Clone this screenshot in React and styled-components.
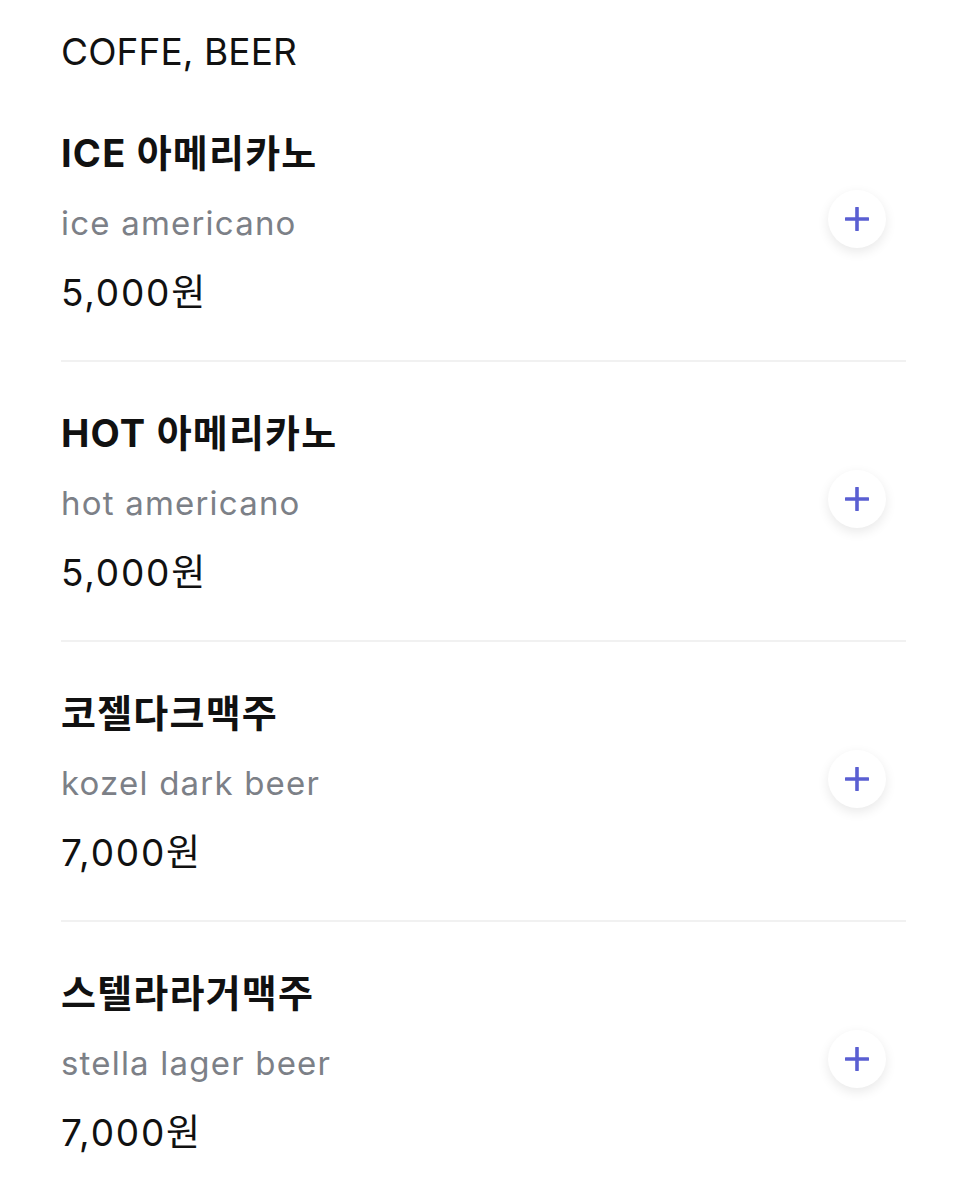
import React from 'react'
import styled, { createGlobalStyle } from 'styled-components'

const GlobalStyle = createGlobalStyle`
  body {
    margin: 0;
    background: #ffffff;
    font-family: Inter, "Noto Sans CJK KR", sans-serif;
    color: #111111;
  }
`

const Page = styled.div`
  padding: 17px 60px 0 61px;
`

const Category = styled.h2`
  margin: 0;
  font-size: 37px;
  font-weight: 400;
  line-height: 70px;
  letter-spacing: 0.1px;
`

const List = styled.ul`
  list-style: none;
  margin: 0;
  padding: 0;
`

const Item = styled.li`
  display: flex;
  align-items: center;
  justify-content: space-between;
  padding: ${props => (props.first ? '31px' : '36px')} 0 32px;
  border-top: ${props => (props.first ? 'none' : '2px solid #f1f1f1')};
`

const Info = styled.div`
  display: flex;
  flex-direction: column;
`

const Name = styled.div`
  font-size: 38px;
  font-weight: 700;
  line-height: 70px;
  letter-spacing: 1.2px;
`

const Desc = styled.div`
  font-size: 33px;
  font-weight: 400;
  line-height: 70px;
  letter-spacing: 1.2px;
  color: #7c8087;
`

const Price = styled.div`
  font-size: 37px;
  font-weight: 400;
  line-height: 70px;
  letter-spacing: 1.8px;
`

const AddButton = styled.button`
  width: 58px;
  height: 58px;
  margin: 0 20px 8px 0;
  border: none;
  border-radius: 50%;
  background: #ffffff;
  box-shadow: 0 4px 12px rgba(0, 0, 0, 0.09);
  display: flex;
  align-items: center;
  justify-content: center;
  padding: 0;
  cursor: pointer;
`

const PlusIcon = () => (
  <svg width="24" height="24" viewBox="0 0 24 24">
    <path d="M12 1v22M1 12h22" stroke="#5a5fd2" strokeWidth="3.6" strokeLinecap="round" />
  </svg>
)

const menu = [
  { name: 'ICE 아메리카노', desc: 'ice americano', price: '5,000원' },
  { name: 'HOT 아메리카노', desc: 'hot americano', price: '5,000원' },
  { name: '코젤다크맥주', desc: 'kozel dark beer', price: '7,000원' },
  { name: '스텔라라거맥주', desc: 'stella lager beer', price: '7,000원' },
]

export default function App() {
  return (
    <>
      <GlobalStyle />
      <Page>
        <Category>COFFE, BEER</Category>
        <List>
          {menu.map((m, i) => (
            <Item key={m.name} first={i === 0}>
              <Info>
                <Name>{m.name}</Name>
                <Desc>{m.desc}</Desc>
                <Price>{m.price}</Price>
              </Info>
              <AddButton aria-label="add">
                <PlusIcon />
              </AddButton>
            </Item>
          ))}
        </List>
      </Page>
    </>
  )
}
